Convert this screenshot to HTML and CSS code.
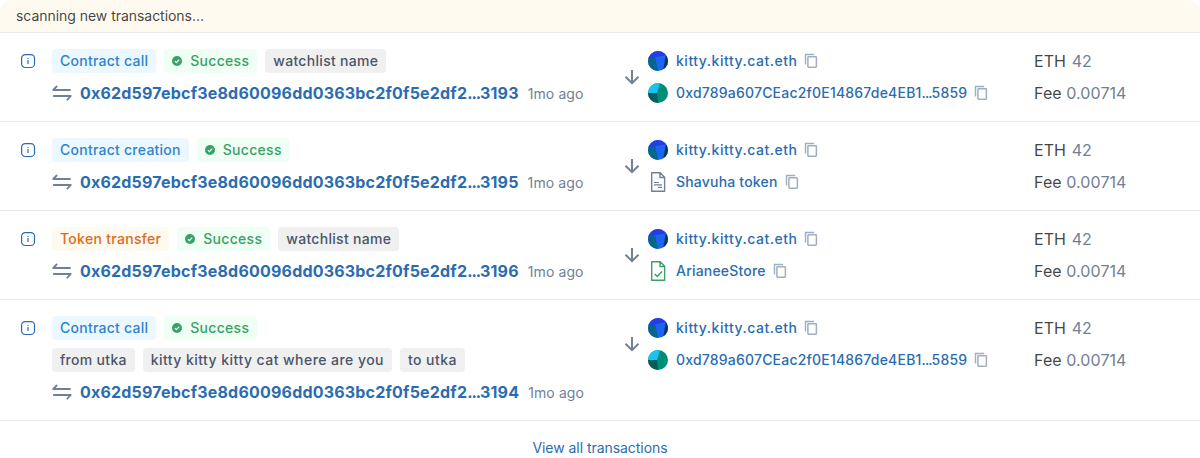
FILE: index.html
```
<!DOCTYPE html>
<html lang="en">
<head>
<meta charset="utf-8">
<title>Latest transactions</title>
<link rel="stylesheet" href="styles.css">
</head>
<body>
<main class="list" id="list">
  <div class="banner">scanning new transactions...</div>
</main>
<footer class="footer"><a>View all transactions</a></footer>

<template id="info"><svg class="info" viewBox="0 0 16 16"><rect x="1.6" y="1.6" width="12.9" height="12.9" rx="3.6" fill="none" stroke="#2b6cb0" stroke-width="1.2"/><path d="M8 7v4M8 4.9v1.2" fill="none" stroke="#6b98c8" stroke-width="1.7"/></svg></template>
<template id="ok"><svg class="ok" viewBox="0 0 10 10"><circle cx="5" cy="5" r="5" fill="#38a169"/><path d="M2.9 5.2l1.5 1.5 2.8-3.1" fill="none" stroke="#f0fff4" stroke-width="1.2"/></svg></template>
<template id="swap"><svg class="swap" viewBox="0 0 20 20"><path d="M18 7H1.2L4.6 3.5M1.8 13h17l-3.5 3.7" fill="none" stroke="#718096" stroke-width="1.8" stroke-linecap="round" stroke-linejoin="round"/></svg></template>
<template id="arrow"><svg class="arrow" viewBox="0 0 16 16"><path d="M8 1v13M1.5 7.8L8 14.2l6.5-6.4" fill="none" stroke="#718096" stroke-width="2"/></svg></template>
<template id="copy"><svg class="copy" viewBox="0 0 14 16"><path d="M1.5 11.5v-10h8.7" fill="none" stroke="#a0aec0" stroke-width="1.4"/><rect x="3.9" y="3.8" width="8.5" height="10.4" rx=".6" fill="none" stroke="#a0aec0" stroke-width="1.5"/></svg></template>
<template id="blue"><svg class="avatar" viewBox="0 0 20 20"><g clip-path="url(#round)"><path fill="#1a63f5" d="M0 0h20v20H0z"/><path fill="#03678b" d="M0 6l7-1 3 15H0z"/><path fill="#053858" d="M18 3h3v17h-6z"/><path fill="#233ee3" d="M0 0h20v4L8 6 0 8z"/></g></svg></template>
<template id="teal"><svg class="avatar" viewBox="0 0 20 20"><g clip-path="url(#round)"><path fill="#018e78" d="M0 0h20v20H0z"/><path fill="#18c3f2" d="M0 0h12L9 10H0z"/><path fill="#035e5c" d="M0 10h9l1 10H0z"/></g></svg></template>
<template id="doc"><svg class="avatar" viewBox="0 0 20 20"><path d="M4 .8h8.2l4.4 4.4v14H3.7V.8zM12 .8v4.7h4.6" fill="none" stroke="#718096" stroke-width="1.4" stroke-linejoin="round"/><path d="M6 10.5h5M6 12.8h8M10 15.3h4" stroke="#718096" stroke-width="1.2"/></svg></template>
<template id="verified"><svg class="avatar" viewBox="0 0 20 20"><path d="M4 .8h8.2l4.4 4.4v14H3.7V.8zM12 .8v4.7h4.6" fill="none" stroke="#38a169" stroke-width="1.4" stroke-linejoin="round"/><path d="M6.8 13l2.5 2.5 4.7-5" fill="none" stroke="#38a169" stroke-width="1.5"/></svg></template>
<svg class="defs" width="0" height="0"><clipPath id="round"><circle cx="10" cy="10" r="10"/></clipPath></svg>
<script src="app.js"></script>
</body>
</html>
```
FILE: styles.css
```
* { box-sizing: border-box; }
body {
  margin: 0;
  background: #fff;
  color: rgba(16, 17, 18, 0.8);
  font-family: Inter, sans-serif;
  font-size: 16px;
  line-height: 24px;
}
svg { display: block; flex: none; }
.defs { position: absolute; }
.banner {
  height: 32px;
  padding: 4px 16px;
  border-radius: 12px 12px 0 0;
  background: #fffaf0;
  font-size: 14px;
  letter-spacing: -0.04px;
}
.row {
  display: grid;
  grid-template-columns: 52px 572px 24px 386px 1fr;
  padding: 16px 0;
  border-top: 1px solid #e8eaec;
}
.info { width: 16px; height: 16px; margin: 4px 0 0 20px; }
.main, .parties, .amounts { display: flex; flex-direction: column; gap: 8px; }
.tags { display: flex; gap: 8px; }
.tag {
  display: flex;
  align-items: center;
  height: 24px;
  padding: 0 8px;
  border-radius: 4px;
  background: #f0f0f1;
  color: #4a5568;
  font-size: 14px;
  font-weight: 500;
  letter-spacing: 0.3px;
  white-space: nowrap;
}
.tag.extra { letter-spacing: 0.45px; }
.tag.extra:first-child { letter-spacing: 0.3px; }
.tag.call { background: #ebf8ff; color: #3182ce; letter-spacing: 0.25px; }
.tag.transfer { background: #fffaf0; color: #dd6b20; }
.tag.success { background: #f0fff4; color: #38a169; }
.ok { width: 10px; height: 10px; margin-right: 8px; }
.hash-line { display: flex; align-items: center; height: 24px; white-space: nowrap; }
.swap { width: 20px; height: 20px; margin-right: 8px; }
.hash { color: #2b6cb0; font-weight: 700; letter-spacing: 0.2px; }
.hash .dots { letter-spacing: -1.1px; }
.age { margin: 2px 0 0 9px; color: #718096; font-size: 14px; letter-spacing: 0.1px; }
.arrow { width: 16px; height: 16px; margin-top: 20px; }
.party { display: flex; align-items: center; height: 24px; color: #2b6cb0; font-size: 14px; font-weight: 500; white-space: nowrap; }
.avatar { width: 20px; height: 20px; margin-right: 8px; }
.address { letter-spacing: 0.2px; }
.address .dots { letter-spacing: -0.9px; }
.blue .address { letter-spacing: 0.52px; }
.copy { width: 14px; height: 16px; margin-left: 7px; }
.amounts { letter-spacing: 0.08px; }
.amounts div:first-child { word-spacing: 1px; }
.amounts span { color: #718096; }
.footer {
  border-top: 1px solid #e8eaec;
  padding-top: 15px;
  text-align: center;
  font-size: 14px;
  letter-spacing: -0.05px;
  color: #2b6cb0;
}
```
FILE: app.js
```
const address = ['teal', '0xd789a607CEac2f0E14867de4EB1<span class="dots">...</span>5859'];
const transactions = [
  { type: 'Contract call', names: ['watchlist name'], end: '3193', to: address },
  { type: 'Contract creation', names: [], end: '3195', to: ['doc', 'Shavuha token'] },
  { type: 'Token transfer', names: ['watchlist name'], end: '3196', to: ['verified', 'ArianeeStore'] },
  { type: 'Contract call', names: [], extra: ['from utka', 'kitty kitty kitty cat where are you', 'to utka'], end: '3194', to: address }
];
const icon = id => document.getElementById(id).innerHTML;
const tags = (names, kind = '') => names.map(n => `<span class="tag ${kind}">${n}</span>`).join('');
const party = ([avatar, name]) => `<div class="party ${avatar}">${icon(avatar)}<span class="address">${name}</span>${icon('copy')}</div>`;

for (const tx of transactions) {
  const row = document.createElement('section');
  row.className = 'row';
  row.innerHTML = `
    <div>${icon('info')}</div>
    <div class="main">
      <div class="tags"><span class="tag ${tx.type === 'Token transfer' ? 'transfer' : 'call'}">${tx.type}</span><span class="tag success">${icon('ok')}Success</span>${tags(tx.names)}</div>
      ${tx.extra ? `<div class="tags">${tags(tx.extra, 'extra')}</div>` : ''}
      <div class="hash-line">${icon('swap')}<span class="hash">0x62d597ebcf3e8d60096dd0363bc2f0f5e2df2<span class="dots">...</span>${tx.end}</span><span class="age">1mo ago</span></div>
    </div>
    <div>${icon('arrow')}</div>
    <div class="parties">${party(['blue', 'kitty.kitty.cat.eth'])}${party(tx.to)}</div>
    <div class="amounts"><div>ETH <span>42</span></div><div>Fee <span>0.00714</span></div></div>`;
  document.getElementById('list').append(row);
}
```
